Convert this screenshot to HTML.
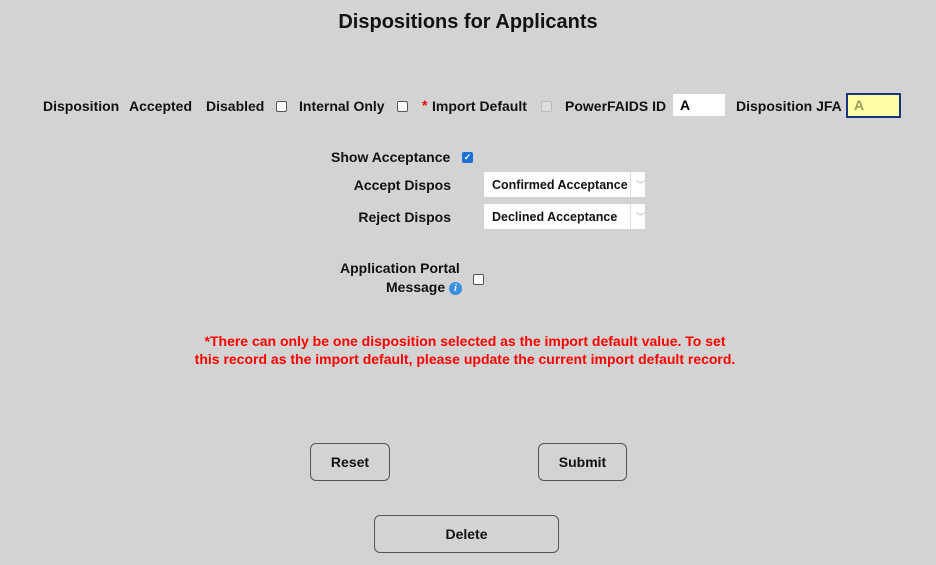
<!DOCTYPE html>
<html><head><meta charset="utf-8"><style>
body{margin:0;width:936px;height:565px;background:#d3d3d3;font-family:"Liberation Sans",sans-serif;font-weight:bold;font-size:14px;color:#111;position:relative;overflow:hidden}
.a{position:absolute;white-space:nowrap;line-height:16px}
.r{text-align:right}
.cb{position:absolute;width:9px;height:9px;border:1px solid #555;border-radius:2px;background:#fff}
.inp{position:absolute;background:#fff;box-sizing:border-box}
.sel{position:absolute;left:484px;width:161px;height:25px;background:#fff;font-size:12.5px}
.sel span{position:absolute;left:8px;top:6px}
.sel i{position:absolute;left:146px;top:0;width:1px;height:25px;background:#ddd}
.sel b{position:absolute;left:152px;top:6px;color:#aaa;font-size:9px;font-weight:normal}
.btn{position:absolute;box-sizing:border-box;border:1px solid #555;border-radius:6px;text-align:center;font-family:"Liberation Sans",sans-serif;font-size:14px;color:#111}
</style></head><body>
<div class="a" style="left:0;width:936px;text-align:center;top:11px;font-size:20px;line-height:22px">Dispositions for Applicants</div>

<div class="a" style="left:43px;top:98px">Disposition</div>
<div class="a" style="left:129px;top:98px">Accepted</div>
<div class="a" style="left:206px;top:98px">Disabled</div>
<div class="cb" style="left:276px;top:101px"></div>
<div class="a" style="left:299px;top:98px">Internal Only</div>
<div class="cb" style="left:397px;top:101px"></div>
<div class="a" style="left:422px;top:97px;color:#e00">*</div>
<div class="a" style="left:432px;top:98px">Import Default</div>
<div class="cb" style="left:541px;top:101px;background:#ddd;border-color:#bbb"></div>
<div class="a" style="left:565px;top:98px">PowerFAIDS ID</div>
<div class="inp" style="left:673px;top:94px;width:52px;height:22px"><span class="a" style="left:7px;top:3px;color:#000">A</span></div>
<div class="a" style="left:736px;top:98px">Disposition JFA</div>
<div class="inp" style="left:846px;top:93px;width:55px;height:25px;background:#ffffa8;border:2px solid #1a3580"><span class="a" style="left:6px;top:2px;color:#9a9a50">A</span></div>

<div class="a" style="left:331px;top:149px">Show Acceptance</div>
<div class="cb" style="left:462px;top:152px;background:#1a6fd8;border-color:#1a6fd8;color:#fff;font-size:9px;line-height:9px;text-align:center">✓</div>
<div class="a r" style="left:300px;width:151px;top:177px">Accept Dispos</div>
<div class="sel" style="top:172px"><span>Confirmed Acceptance</span><i></i><b>﹀</b></div>
<div class="a r" style="left:300px;width:151px;top:209px">Reject Dispos</div>
<div class="sel" style="top:204px"><span>Declined Acceptance</span><i></i><b>﹀</b></div>

<div class="a" style="left:340px;top:260px">Application Portal</div>
<div class="a" style="left:386px;top:279px">Message</div>
<div style="position:absolute;left:449px;top:282px;width:13px;height:13px;border-radius:50%;background:#3a8fe0;color:#fff;font-size:10px;line-height:13px;text-align:center;font-style:italic;font-family:'Liberation Serif',serif">i</div>
<div class="cb" style="left:473px;top:274px"></div>

<div class="a" style="left:0;width:930px;text-align:center;top:332px;color:#f00;line-height:18px">*There can only be one disposition selected as the import default value. To set<br>this record as the import default, please update the current import default record.</div>

<div class="btn" style="left:310px;top:443px;width:80px;height:38px;line-height:36px">Reset</div>
<div class="btn" style="left:538px;top:443px;width:89px;height:38px;line-height:36px">Submit</div>
<div class="btn" style="left:374px;top:515px;width:185px;height:38px;line-height:36px">Delete</div>
</body></html>
